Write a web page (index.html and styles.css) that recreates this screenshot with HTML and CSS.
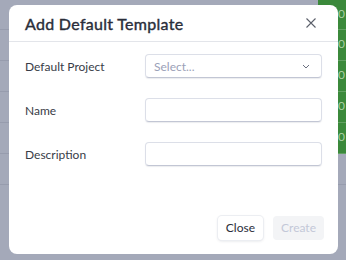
FILE: index.html
```html
<!DOCTYPE html>
<html lang="en">
<head>
    <meta charset="UTF-8">
    <title>Add Default Template</title>
    <link rel="stylesheet" href="styles.css">
</head>
<body>

<div class="page">
    <div class="row first"><div class="cell"></div><div class="cell green">000</div></div>
    <div class="row"><div class="cell"></div><div class="cell green">000</div></div>
    <div class="row"><div class="cell"></div><div class="cell green">000</div></div>
    <div class="row"><div class="cell"></div><div class="cell green">000</div></div>
    <div class="row"><div class="cell"></div><div class="cell green">000</div></div>
    <div class="row"><div class="cell"></div><div class="cell"></div></div>
</div>

<div class="modal">
    <div class="modal-head">
        <h2 class="title">Add Default Template</h2>
        <svg class="close-x" width="10" height="10" viewBox="0 0 10 10">
            <path d="M0.5 0.5 L9.5 9.5 M9.5 0.5 L0.5 9.5" stroke="#5b5f6a" stroke-width="1.1" fill="none"/>
        </svg>
    </div>
    <div class="modal-body">
        <div class="field">
            <label class="label">Default Project</label>
            <div class="input select">
                <span class="placeholder">Select...</span>
                <svg width="8" height="5" viewBox="0 0 8 5">
                    <path d="M1 1 L4 4 L7 1" stroke="#6b7080" stroke-width="1" fill="none"/>
                </svg>
            </div>
        </div>
        <div class="field">
            <label class="label">Name</label>
            <div class="input"></div>
        </div>
        <div class="field">
            <label class="label">Description</label>
            <div class="input"></div>
        </div>
    </div>
    <div class="modal-foot">
        <div class="btn close">Close</div>
        <div class="btn create">Create</div>
    </div>
</div>

</body>
</html>
```

FILE: styles.css
```css
html,body{
    height: 100%;
}
body{
    margin: 0;
    background: #a4a9b9;
    overflow: hidden;
    font-family: "Segoe UI", Lato, sans-serif;
}

.page{
    display: flex;
    flex-direction: column;
}

.row{
    display: flex;
    height: 31px;
    border-bottom: 1px solid #979cad;
    box-sizing: border-box;
}
.row.first{
    height: 30px;
}

.cell{
    flex: 1;
}

.cell.green{
    flex: 0 0 28px;
    background: #3b893b;
    color: #a9cfa4;
    font-size: 12px;
    line-height: 28px;
    padding-left: 6px;
    box-sizing: border-box;
    white-space: nowrap;
    border-bottom: 1px solid #62a062;
    margin-bottom: -1px;
}

.modal{
    position: absolute;
    left: 9px;
    top: 5px;
    width: 329px;
    height: 249px;
    background: #fff;
    border-radius: 8px;
    display: flex;
    flex-direction: column;
}

.modal-head{
    height: 36px;
    border-bottom: 1px solid #e3e5ea;
    display: flex;
    align-items: center;
    justify-content: space-between;
    padding: 0 22px 0 16px;
}

.title{
    margin: 0;
    font-size: 16px;
    font-weight: 400;
    letter-spacing: 0.3px;
    -webkit-text-stroke: 0.4px #2a2e3a;
    color: #2a2e3a;
}

.modal-body{
    flex: 1;
    padding: 12px 16px 0 16px;
    display: flex;
    flex-direction: column;
    gap: 20px;
}

.field{
    display: flex;
    align-items: center;
}

.label{
    width: 120px;
    font-size: 12px;
    color: #383c47;
}

.input{
    flex: 1;
    height: 24px;
    box-sizing: border-box;
    border: 1px solid #dcdfe8;
    border-bottom-color: #c2c6d4;
    border-radius: 4px;
    box-shadow: 0 1px 1px rgba(120, 128, 150, 0.15);
}

.select{
    display: flex;
    align-items: center;
    justify-content: space-between;
    padding: 0 11px 0 8px;
}

.placeholder{
    font-size: 12px;
    color: #9ba1b8;
}

.modal-foot{
    display: flex;
    justify-content: flex-end;
    gap: 10px;
    padding: 0 14px 14px 0;
}

.btn{
    height: 24px;
    line-height: 24px;
    padding: 0 8px;
    border-radius: 4px;
    font-size: 12px;
}

.close{
    color: #2a2e3a;
    background: #fff;
    box-shadow: 0 0 0 1px #eceef2, 0 1px 3px rgba(60, 66, 87, 0.18);
}

.create{
    width: 35px;
    text-align: center;
    color: #c3c8d8;
    background: #f3f4f6;
}
```
